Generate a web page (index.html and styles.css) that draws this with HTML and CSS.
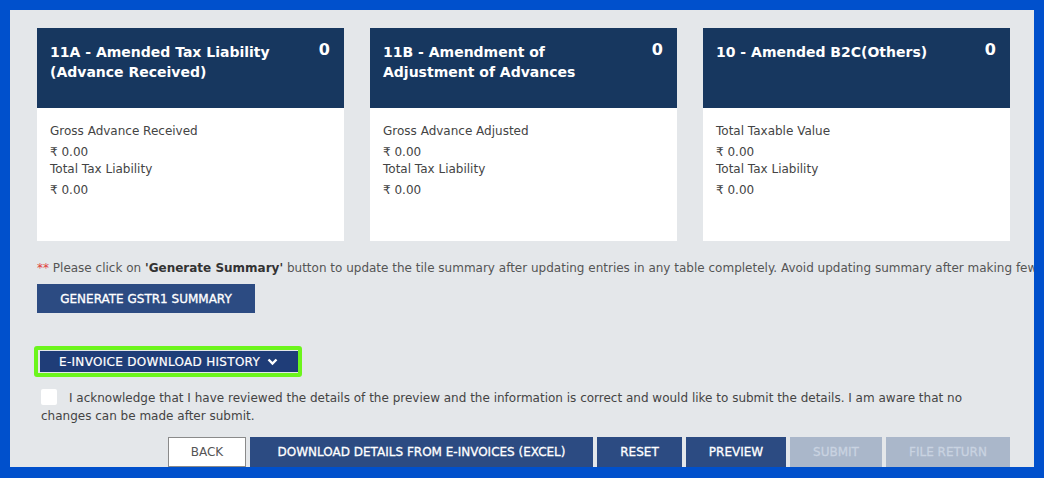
FILE: index.html
```html
<!DOCTYPE html>
<html lang="en">
<head>
    <meta charset="UTF-8">
    <meta name="viewport" content="width=device-width, initial-scale=1.0">
    <title>GSTR-1 Amendment Summary</title>
    <link rel="stylesheet" href="styles.css">
</head>
<body>
    <div class="frame">
        <div class="page">
            <div class="tiles">
                <div class="tile">
                    <div class="tile-head">
                        <span class="tile-title">11A - Amended Tax Liability (Advance Received)</span>
                        <span class="tile-count">0</span>
                    </div>
                    <div class="tile-body">
                        <p class="label">Gross Advance Received</p>
                        <p class="value">&#8377; 0.00</p>
                        <p class="label">Total Tax Liability</p>
                        <p class="value">&#8377; 0.00</p>
                    </div>
                </div>
                <div class="tile">
                    <div class="tile-head">
                        <span class="tile-title">11B - Amendment of Adjustment of Advances</span>
                        <span class="tile-count">0</span>
                    </div>
                    <div class="tile-body">
                        <p class="label">Gross Advance Adjusted</p>
                        <p class="value">&#8377; 0.00</p>
                        <p class="label">Total Tax Liability</p>
                        <p class="value">&#8377; 0.00</p>
                    </div>
                </div>
                <div class="tile">
                    <div class="tile-head">
                        <span class="tile-title">10 - Amended B2C(Others)</span>
                        <span class="tile-count">0</span>
                    </div>
                    <div class="tile-body">
                        <p class="label">Total Taxable Value</p>
                        <p class="value">&#8377; 0.00</p>
                        <p class="label">Total Tax Liability</p>
                        <p class="value">&#8377; 0.00</p>
                    </div>
                </div>
            </div>

            <p class="note"><span class="req">**</span> Please click on <b>'Generate Summary'</b> button to update the tile summary after updating entries in any table completely. Avoid updating summary after making few entries in a table.</p>

            <button class="btn btn-primary btn-generate">GENERATE GSTR1 SUMMARY</button>

            <div class="highlight">
                <button class="btn btn-dark btn-history">E-INVOICE DOWNLOAD HISTORY
                    <svg class="chevron" viewBox="0 0 10 8" width="11" height="8"><path d="M1 1.5 L5 5.5 L9 1.5" fill="none" stroke="#fff" stroke-width="2.4"/></svg>
                </button>
            </div>

            <div class="ack">
                <span class="checkbox"></span>I acknowledge that I have reviewed the details of the preview and the information is correct and would like to submit the details. I am aware that no changes can be made after submit.
            </div>

            <div class="actions">
                <button class="btn btn-default">BACK</button>
                <button class="btn btn-primary btn-download">DOWNLOAD DETAILS FROM E-INVOICES (EXCEL)</button>
                <button class="btn btn-primary btn-reset">RESET</button>
                <button class="btn btn-primary btn-preview">PREVIEW</button>
                <button class="btn btn-disabled btn-submit" disabled>SUBMIT</button>
                <button class="btn btn-disabled btn-file" disabled>FILE RETURN</button>
            </div>
        </div>
    </div>
</body>
</html>
```

FILE: styles.css
```css
html, body {
    margin: 0;
    padding: 0;
}
body {
    background-color: #0050cc;
    font-family: "DejaVu Sans", Verdana, sans-serif;
    font-size: 12px;
    color: #444;
}
.frame {
    margin: 10px 10px 0 10px;
    width: 1024px;
    height: 457px;
    overflow: hidden;
    background-color: #e4e7ea;
}
.page {
    padding: 18px 24px 0 27px;
}
.tiles {
    display: flex;
    gap: 26px;
}
.tile {
    width: 307px;
    height: 213px;
    background-color: #fff;
}
.tile-head {
    height: 80px;
    box-sizing: border-box;
    padding: 14px 14px 0 13px;
    background-color: #17375f;
    color: #fff;
    display: flex;
    justify-content: space-between;
    align-items: flex-start;
}
.tile-title {
    font-size: 14px;
    font-weight: bold;
    line-height: 20px;
    width: 230px;
}
.tile-count {
    font-size: 16px;
    font-weight: bold;
    line-height: 16px;
}
.tile-body {
    padding: 15px 13px 0 13px;
    color: #444;
}
.tile-body p {
    margin: 0;
    line-height: 17px;
}
.tile-body .label {
    margin-bottom: 4px;
}
.note {
    margin: 18px 0 7px 0;
    line-height: 18px;
    white-space: nowrap;
    color: #555;
}
.note b {
    color: #333;
}
.req {
    color: #e0403c;
}
.btn {
    font-family: "DejaVu Sans", Verdana, sans-serif;
    font-size: 12px;
    border: none;
    border-radius: 0;
    cursor: pointer;
    padding: 0;
}
.btn-primary {
    background-color: #2c4b82;
    color: #fff;
    -webkit-text-stroke: 0.3px #fff;
}
.btn-dark {
    background-color: #1f3d78;
    color: #fff;
    -webkit-text-stroke: 0.2px #fff;
}
.btn-generate {
    display: block;
    width: 218px;
    height: 29px;
}
.highlight {
    display: inline-block;
    margin: 33px 0 0 -3px;
    border: 4px solid #6cf51c;
    border-radius: 3px;
    padding: 1px 0 1px 2px;
}
.btn-history {
    display: flex;
    align-items: center;
    gap: 7px;
    height: 21px;
    width: 258px;
    padding: 0 0 0 19px;
    letter-spacing: 0.3px;
}
.chevron {
    display: block;
}
.ack {
    margin: 12px 0 0 4px;
    line-height: 18px;
    color: #444;
}
.checkbox {
    display: inline-block;
    width: 16px;
    height: 16px;
    background-color: #fff;
    border-radius: 2px;
    vertical-align: -3px;
    margin-right: 12px;
}
.actions {
    margin-top: 12px;
    display: flex;
    justify-content: flex-end;
    gap: 4px;
}
.actions .btn {
    height: 30px;
}
.btn-default {
    background-color: #fff;
    color: #555;
    border: 1px solid #8a8a8a;
    width: 78px;
}
.btn-download {
    width: 343px;
}
.btn-reset {
    width: 85px;
}
.btn-preview {
    width: 100px;
}
.btn-disabled {
    background-color: #aab7ca;
    color: #c9d3e1;
    -webkit-text-stroke: 0.3px #c9d3e1;
    cursor: default;
}
.btn-submit {
    width: 92px;
}
.btn-file {
    width: 124px;
}
```
